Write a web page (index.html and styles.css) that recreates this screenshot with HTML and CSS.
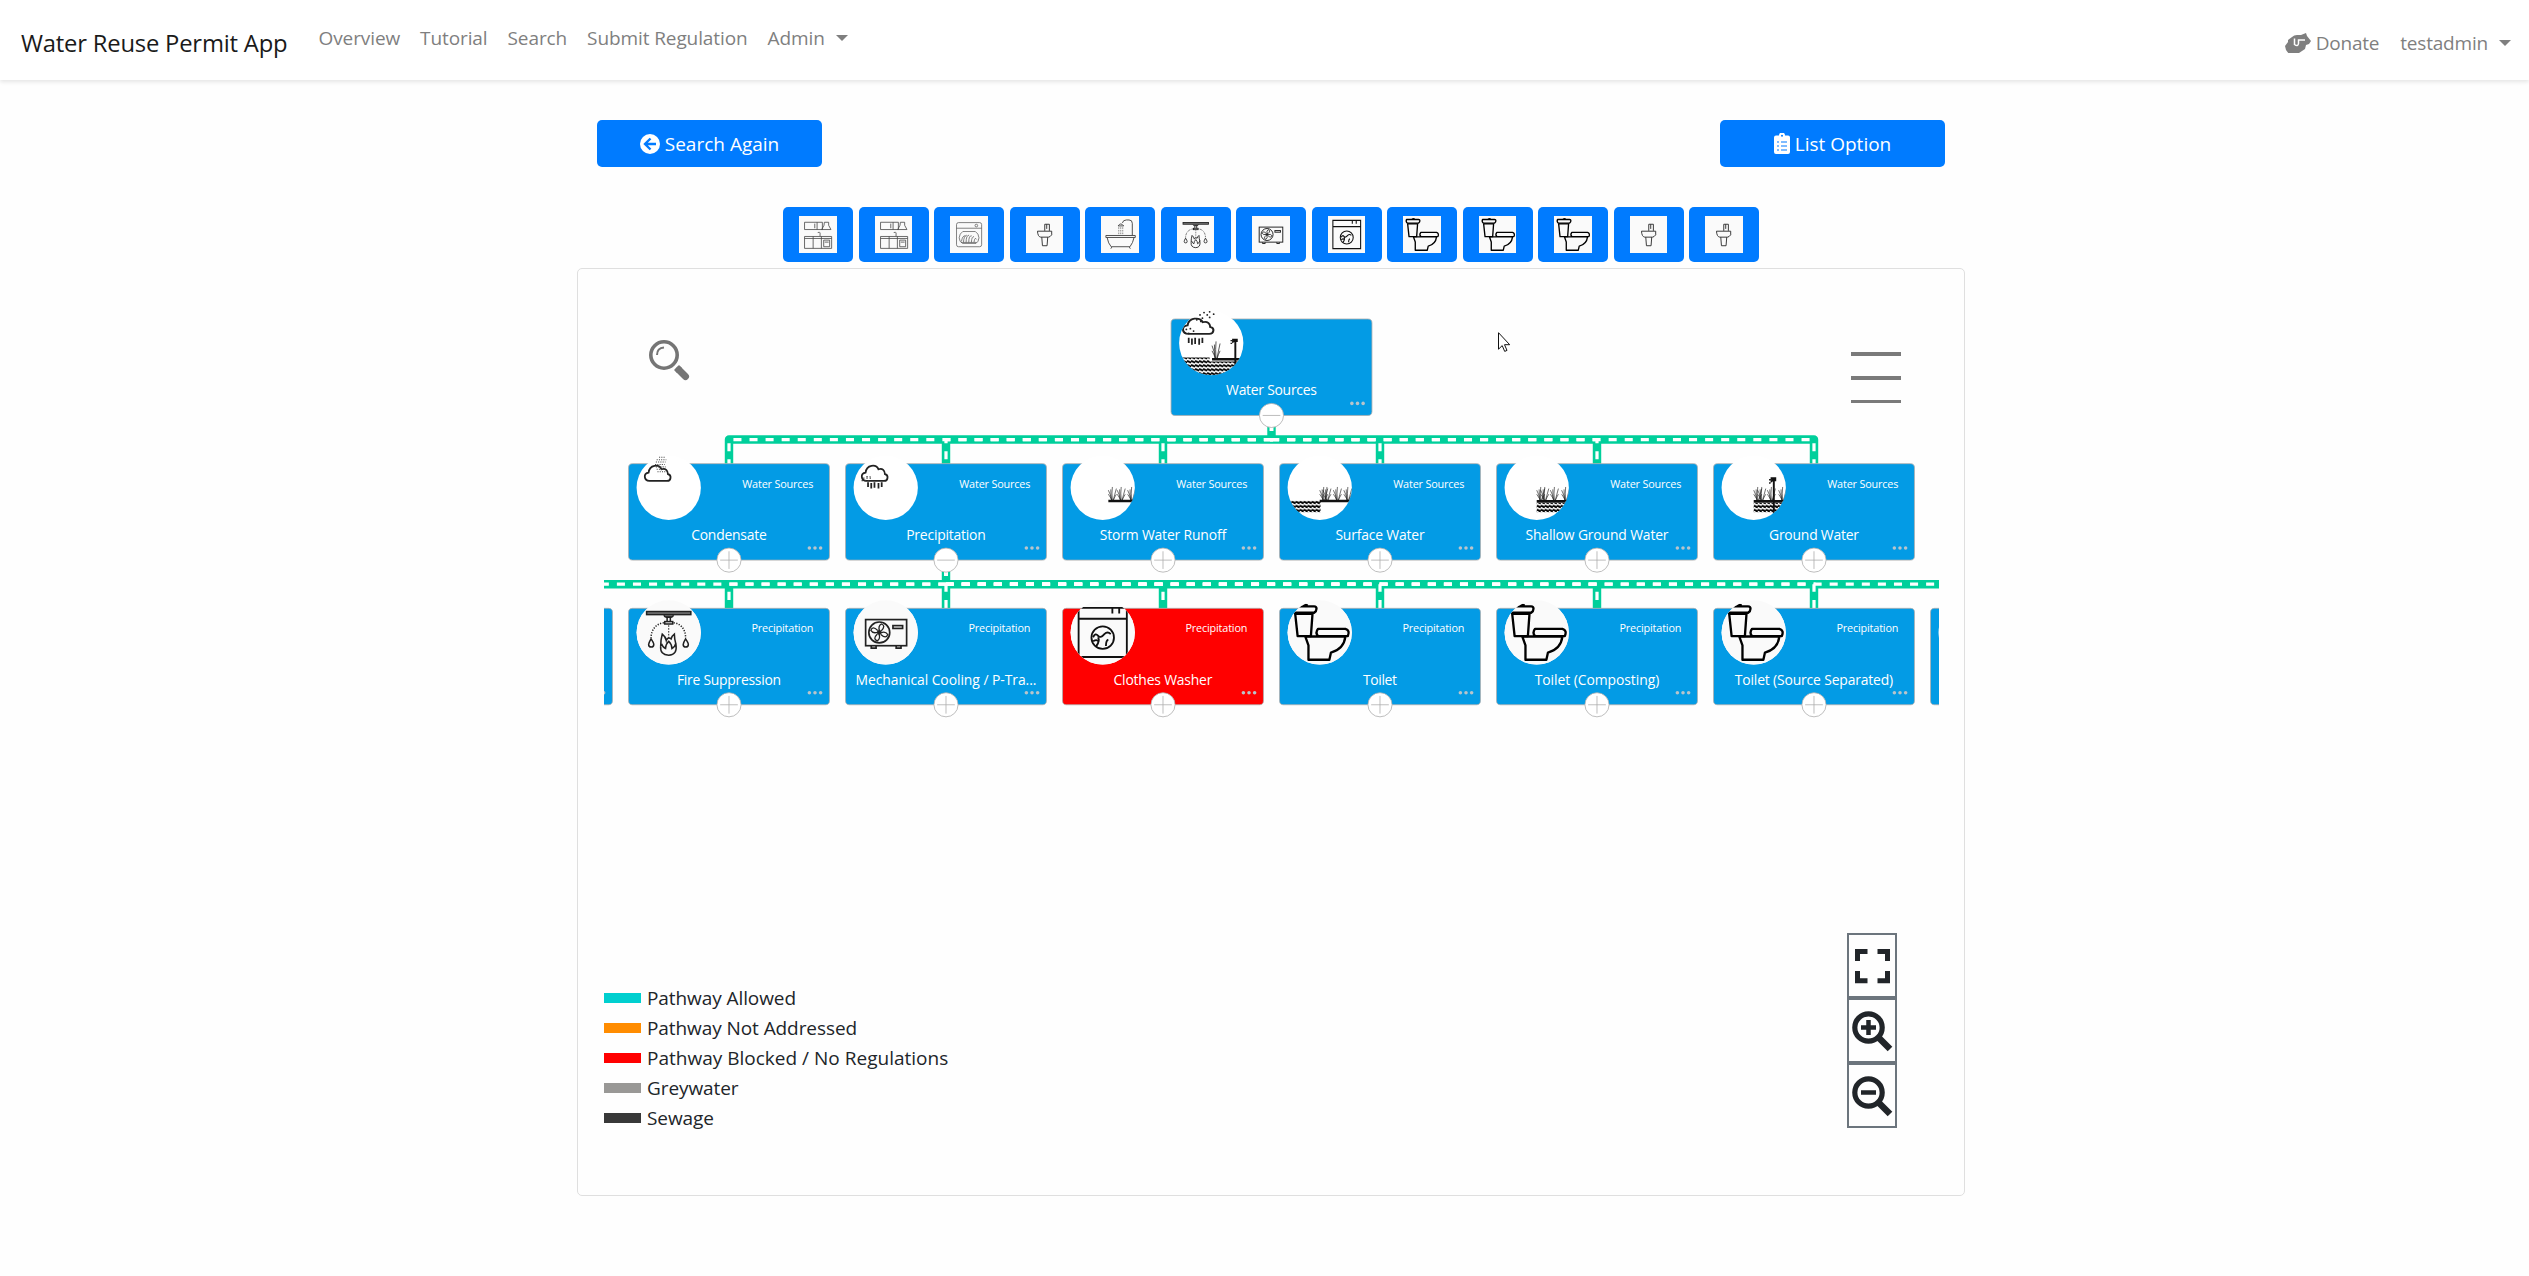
FILE: index.html
```html
<!DOCTYPE html>
<html lang="en">
<head>
<meta charset="utf-8">
<title>Water Reuse Permit App</title>
<link rel="stylesheet" href="styles.css">
</head>
<body>
<svg class="defs" width="0" height="0" aria-hidden="true">
  <defs>
    <clipPath id="round"><circle cx="50" cy="30" r="40"/></clipPath>
    <pattern id="waves" width="5" height="5" patternUnits="userSpaceOnUse" y="1">
      <path d="M-1 2.200Q.5.800 2.500 2.200T6 2.200" fill="none" stroke="#000" stroke-width="2.500"/>
    </pattern>
    <g id="card">
      <rect width="250" height="120" rx="5" stroke="#aeaeae"/>
      <g fill="#b9c4cb"><circle cx="225" cy="105" r="2.2"/><circle cx="232" cy="105" r="2.2"/><circle cx="239" cy="105" r="2.2"/></g>
      <circle cx="50" cy="30" r="40" fill="#fff"/>
    </g>
    <g id="minus"><circle cx="125" cy="120" r="15" fill="#fff" stroke="#aeaeae"/><path d="M114 120h22" stroke="#aeaeae"/></g>
    <g id="plus"><use href="#minus"/><path d="M125 109v22" stroke="#aeaeae"/></g>
    <g id="tuft" fill="none" stroke="#222" stroke-width=".8">
      <path d="M0 0Q-1-8-4-13M1 0Q0-10 1-17M2 0Q4-8 6-15M1 0Q-2-5-4-8M2 0Q4-5 6-8M0 0Q-1-9-1-14"/>
    </g>
    <g id="cloud" fill="none" stroke="#222" stroke-width="2.200">
      <path d="M26 21.500C19 21 18 12 25 11C26 1 38 0 41 7C46 5 49 9 49 13C54 14 53 21.500 48 21.500Z"/>
    </g>
    <g id="rain" stroke="#222" stroke-width="2.200"><path d="M28 23v6M32 24v7M36 23v7M41 24v7M45 23v6"/></g>
    <g id="pump"><path d="M72 17h7v5h-4l-3 2z" fill="#111"/><path d="M76 20v42" stroke="#111" stroke-width="2.400"/><path d="M70 20h4M70 24h2" stroke="#222" stroke-width="2"/></g>

    <g id="fire" fill="none" stroke="#222" stroke-width="1.900">
      <rect x="22.500" y="4" width="55" height="3.800" fill="#777"/>
      <path d="M44 8.500q1 2.500 3 2.500h6q2 0 3-2.500" fill="#444"/><path d="M48 11v6M52 11v6"/><rect x="45" y="16.500" width="10" height="3"/>
      <path d="M44 18C34 19 28 27 28 37M56 18C66 19 71 27 71 37" stroke-dasharray="1.500 1.800"/>
      <path d="M50 21v17" stroke-dasharray="2 1.600" stroke-width="1.200"/>
      <path d="M28 38q-3 5-3 7a3.200 3.200 0 006.400 0q0-2-3.400-7zM71 38q-3 5-3 7a3.200 3.200 0 006.400 0q0-2-3.400-7z"/>
      <path d="M40 47Q40 39 42 32Q46 35 47 40Q49 35 53 38Q54 34 57 32Q57 38 59 45Q61 58 50 58.500Q39 58 40 47M41 44Q43 49 46 50Q46 45 50 41Q54 45 54 50Q58 48 59 43"/>
    </g>
    <g id="cooling" fill="none" stroke="#222" stroke-width="2.100">
      <rect x="25" y="14" width="51" height="32.500"/><circle cx="42" cy="30" r="13"/><circle cx="42" cy="30" r="2" fill="#222"/>
      <g stroke-width="1.600" transform="rotate(-20 42 30)"><path id="blade" d="M43 28Q43 22 48 21Q53 25 45 29"/><use href="#blade" transform="rotate(90 42 30)"/><use href="#blade" transform="rotate(180 42 30)"/><use href="#blade" transform="rotate(270 42 30)"/></g>
      <rect x="59" y="21.500" width="12" height="3.500"/><path d="M32 47v2.500h6V47M63 47v2.500h6V47"/>
    </g>
    <g id="washer" fill="none" stroke="#111" stroke-width="2.300">
      <path d="M20 -.500h60v61H20zM20 13h60M62 .500v6M70.500 .500v6"/><circle cx="50" cy="36.500" r="14"/>
      <path d="M38 36q3-6 6-2t8-2q4-4 8 0M42 47q5-7 2-11M54 47q0-7 3-8M38 41q5-3 6 0"/>
    </g>
    <g id="toilet" fill="none" stroke="#000" stroke-width="2.900" stroke-linejoin="round">
      <path d="M29-3.500q3-1.500 6 0M17-2.500h26q3 0 3 3t-3 5H19q-4-3-2-8z"/><path d="M19.500 7L22.500 34.500H39L41 7z"/>
      <path d="M48 34.500q-4-4 0-9h34q6 2 3 9zM32 35l4 11v18h26l2-9Q80 51 82 35z"/>
    </g>
    <g id="kitchen" fill="none" stroke="#444" stroke-width="2.400">
      <path d="M16 19h54v22H16zM54 19v22M47 23v14M76 19h13v9l7 13H68l7-13zM16 62h82v36H16zM42 62v36M67 62v36M16 68h82M63 61V51q0-3-7-1M74 73h18v20H74zM77 79h12"/>
    </g>
    <g id="dishwasher" fill="none" stroke="#555" stroke-width="2.200">
      <rect x="19" y="20" width="76" height="73" rx="6"/><path d="M19 37h76"/><circle cx="79" cy="29" r="4"/>
      <path d="M38 47h38q10 6 11 19-1 12-9 17H37q-9-4-10-17 1-13 11-19z"/><path d="M34 77q3-19 12-17M40 80q1-20 10-22M48 80q0-22 9-22M56 80q0-22 9-20M64 80q1-20 8-17M72 79q2-17 8-8M33 80h47"/>
    </g>
    <g id="sink" fill="none" stroke="#333" stroke-width="2.900">
      <path d="M56 45V25h14v20M62 25v14M34 46h43v11q-5 7-10 7H44q-9-1-10-18zM47 64l2 26h14l2-26"/>
    </g>
    <g id="bath" fill="none" stroke="#444" stroke-width="2.800">
      <path d="M14 59h89v6H14zM18 66q3 17 12 27h57q9-12 12-27M32 94l-3 5M85 94l3 5M94 58V22q0-10-10-10h-8q-10 0-12 9"/><path d="M51 30q8-12 17 0z"/><path d="M53 34v23M59 34v23M65 34v23" stroke-dasharray="5 3" stroke-width="1.800"/>
    </g>
  </defs>
</svg>

<header class="navbar">
  <a class="brand">Water Reuse Permit App</a>
  <nav class="links">
    <a>Overview</a><a>Tutorial</a><a>Search</a><a>Submit Regulation</a><a class="caret">Admin</a>
  </nav>
  <nav class="links account">
    <a class="donate"><svg width="26" height="20" viewBox="0 0 26 20"><path d="M0 13l3-4V7l4-3q2-2 5-2h4l5-2 1 3 4 5-2 3-3 1-1 4-3 2-3 2H8l-4 1-3-4z" fill="#7f7f7f"/><path d="M9.500 5.500v6q3.500 2.500 4-1V7H20" fill="none" stroke="#fff" stroke-width="1.500"/></svg>Donate</a><a class="caret">testadmin</a>
  </nav>
</header>

<main>
  <div class="actions">
    <button class="btn"><svg width="20" height="20" viewBox="0 0 20 20"><circle cx="10" cy="10" r="10" fill="#fff"/><path d="M10.500 4.500L5 10l5.500 5.500M5.500 10H16" fill="none" stroke="#007bff" stroke-width="2.400"/></svg><span>Search Again</span></button>
    <button class="btn"><svg width="16" height="21" viewBox="0 0 16 21"><path d="M2 2.500h3a3 3 0 016 0h3a2 2 0 012 2V19a2 2 0 01-2 2H2a2 2 0 01-2-2V4.500a2 2 0 012-2z" fill="#fff"/><circle cx="8" cy="2.800" r="1" fill="#007bff"/><path d="M3 9h2M7 9h6M3 13h2M7 13h6M3 17h2M7 17h6" stroke="#007bff" stroke-width="1.200"/></svg><span>List Option</span></button>
  </div>

  <div class="fixtures">
    <button class="tile"><svg viewBox="0 0 112 112"><use href="#kitchen"/></svg></button>
    <button class="tile"><svg viewBox="0 0 112 112"><use href="#kitchen"/></svg></button>
    <button class="tile"><svg viewBox="0 0 112 112"><use href="#dishwasher"/></svg></button>
    <button class="tile"><svg viewBox="0 0 112 112"><use href="#sink"/></svg></button>
    <button class="tile"><svg viewBox="0 0 112 112"><use href="#bath"/></svg></button>
    <button class="tile"><svg viewBox="10 -10 80 80"><use href="#fire"/></svg></button>
    <button class="tile"><svg viewBox="10 -10 80 80"><use href="#cooling"/></svg></button>
    <button class="tile"><svg viewBox="10 -10 80 80"><use href="#washer"/></svg></button>
    <button class="tile"><svg viewBox="10 -10 80 80"><use href="#toilet"/></svg></button>
    <button class="tile"><svg viewBox="10 -10 80 80"><use href="#toilet"/></svg></button>
    <button class="tile"><svg viewBox="10 -10 80 80"><use href="#toilet"/></svg></button>
    <button class="tile"><svg viewBox="0 0 112 112"><use href="#sink"/></svg></button>
    <button class="tile"><svg viewBox="0 0 112 112"><use href="#sink"/></svg></button>
  </div>

  <section class="panel">
    <svg class="chart" width="1335" height="664">
      <g transform="translate(667.500 50) scale(.8037)">
        <g class="pipe">
          <path d="M0 120V150H-675V180M0 150H675V180M-405 150V180M-135 150V180M135 150V180M405 150V180"/>
          <path d="M-405 300V330M-900 330H900M-675 330V360M-405 330V360M-135 330V360M135 330V360M405 330V360M675 330V360"/>
        </g>
        <g class="flow">
          <path d="M0 120V150H-675V180"/><path d="M0 120V150H675V180"/><path d="M0 120V150H-405V180"/><path d="M0 120V150H405V180"/><path d="M0 120V150H-135V180"/><path d="M0 120V150H135V180"/>
          <path d="M-405 300V330H-900"/><path d="M-405 300V330H900"/><path d="M-405 300V360"/><path d="M-405 300V330H-675V360"/><path d="M-405 300V330H-135V360"/><path d="M-405 300V330H135V360"/><path d="M-405 300V330H405V360"/><path d="M-405 300V330H675V360"/>
        </g>

        <g transform="translate(-125 0)">
          <use href="#card" class="blue"/>
          <g clip-path="url(#round)">
            <use href="#cloud" transform="translate(-9 -3) scale(1.180 1)"/><use href="#rain" transform="translate(-6 -2) scale(1 1.100)"/>
            <use href="#tuft" transform="translate(55 50) scale(1 1.300)"/>
            <path d="M51 50h40" stroke="#111" stroke-width="3"/><path d="M8 48h40v5H8zM8 53h84v20H8z" fill="url(#waves)"/>
            <use href="#pump" transform="translate(4 11) scale(1 .8)"/>
          </g>
          <path d="M36-5h.1M41-8h.1M48-9h.1M53-6h.1M45-5h.1M39-1h.1M48-2h.1M32 1h.1M37 3h.1M19 13h.1M24 12h.1M28 15h.1M22 18h.1M17 17h.1" stroke="#222" stroke-width="2.200" stroke-linecap="round"/>
          <text class="name" x="125" y="95" textLength="113">Water Sources</text><use href="#minus"/>
        </g>

        <g transform="translate(-800 180)">
          <use href="#card" class="blue"/><use href="#cloud"/>
          <path d="M38-8h8M35-5h12M34-2h12M33 1h12M34 4h12M35 7h11M36 10h10" stroke="#444" stroke-width="1.300" stroke-dasharray="1.300 1.500"/>
          <text class="name" x="125" y="95" textLength="94">Condensate</text><text class="from" x="230" y="30" textLength="88.500">Water Sources</text><use href="#plus"/>
        </g>
        <g transform="translate(-530 180)">
          <use href="#card" class="blue"/><use href="#cloud"/><use href="#rain"/>
          <path d="M20 21h12M22 18h12M26 16h5" stroke="#333" stroke-width="1.500" stroke-dasharray="1.500 2.500"/>
          <text class="name" x="125" y="95" textLength="99">Precipitation</text><text class="from" x="230" y="30" textLength="88.500">Water Sources</text><use href="#minus"/>
        </g>
        <g transform="translate(-260 180)">
          <use href="#card" class="blue"/>
          <g clip-path="url(#round)"><use href="#tuft" x="61" y="46"/><use href="#tuft" x="72" y="46"/><use href="#tuft" x="85" y="46"/><path d="M57 46.500h33" stroke="#111" stroke-width="3"/></g>
          <text class="name" x="125" y="95" textLength="157.500">Storm Water Runoff</text><text class="from" x="230" y="30" textLength="88.500">Water Sources</text><use href="#plus"/>
        </g>
        <g transform="translate(10 180)">
          <use href="#card" class="blue"/>
          <g clip-path="url(#round)"><use href="#tuft" x="54" y="46"/><use href="#tuft" x="58" y="46"/><use href="#tuft" x="71" y="46"/><use href="#tuft" x="84" y="46"/><path d="M50 46.500h40" stroke="#111" stroke-width="3"/><path d="M8 46h43v15H8z" fill="url(#waves)"/></g>
          <text class="name" x="125" y="95" textLength="111">Surface Water</text><text class="from" x="230" y="30" textLength="88.500">Water Sources</text><use href="#plus"/>
        </g>
        <g transform="translate(280 180)">
          <use href="#card" class="blue"/>
          <g clip-path="url(#round)"><use href="#tuft" x="54" y="46"/><use href="#tuft" x="59" y="46"/><use href="#tuft" x="71" y="46"/><use href="#tuft" x="85" y="46"/><path d="M50 46.500h40" stroke="#111" stroke-width="2.500"/><path d="M50 48h40v13H50z" fill="url(#waves)"/></g>
          <text class="name" x="125" y="95" textLength="178">Shallow Ground Water</text><text class="from" x="230" y="30" textLength="88.500">Water Sources</text><use href="#plus"/>
        </g>
        <g transform="translate(550 180)">
          <use href="#card" class="blue"/>
          <g clip-path="url(#round)"><use href="#tuft" x="54" y="46"/><use href="#tuft" x="59" y="46"/><use href="#tuft" x="71" y="46"/><use href="#tuft" x="85" y="46"/><path d="M50 46.500h40" stroke="#111" stroke-width="2.500"/><path d="M50 48h40v13H50z" fill="url(#waves)"/><use href="#pump" x="-1"/></g>
          <text class="name" x="125" y="95" textLength="112">Ground Water</text><text class="from" x="230" y="30" textLength="88.500">Water Sources</text><use href="#plus"/>
        </g>

        <g transform="translate(-1070 360)"><use href="#card" class="blue"/></g>
        <g transform="translate(-800 360)">
          <use href="#card" class="blue"/><circle class="photo" cx="50" cy="30" r="40"/><use href="#fire"/>
          <text class="name" x="125" y="95" textLength="129.500">Fire Suppression</text><text class="from" x="230" y="30" textLength="77">Precipitation</text><use href="#plus"/>
        </g>
        <g transform="translate(-530 360)">
          <use href="#card" class="blue"/><circle class="photo" cx="50" cy="30" r="40"/><use href="#cooling"/>
          <text class="name" x="125" y="95" textLength="225">Mechanical Cooling / P-Tra...</text><text class="from" x="230" y="30" textLength="77">Precipitation</text><use href="#plus"/>
        </g>
        <g transform="translate(-260 360)">
          <use href="#card" class="red"/><circle class="photo" cx="50" cy="30" r="40"/><g clip-path="url(#round)"><use href="#washer"/></g>
          <text class="name" x="125" y="95" textLength="123">Clothes Washer</text><text class="from" x="230" y="30" textLength="77">Precipitation</text><use href="#plus"/>
        </g>
        <g transform="translate(10 360)">
          <use href="#card" class="blue"/><circle class="photo" cx="50" cy="30" r="40"/><g clip-path="url(#round)"><use href="#toilet"/></g>
          <text class="name" x="125" y="95" textLength="42">Toilet</text><text class="from" x="230" y="30" textLength="77">Precipitation</text><use href="#plus"/>
        </g>
        <g transform="translate(280 360)">
          <use href="#card" class="blue"/><circle class="photo" cx="50" cy="30" r="40"/><g clip-path="url(#round)"><use href="#toilet"/></g>
          <text class="name" x="125" y="95" textLength="155">Toilet (Composting)</text><text class="from" x="230" y="30" textLength="77">Precipitation</text><use href="#plus"/>
        </g>
        <g transform="translate(550 360)">
          <use href="#card" class="blue"/><circle class="photo" cx="50" cy="30" r="40"/><g clip-path="url(#round)"><use href="#toilet"/></g>
          <text class="name" x="125" y="95" textLength="197">Toilet (Source Separated)</text><text class="from" x="230" y="30" textLength="77">Precipitation</text><use href="#plus"/>
        </g>
        <g transform="translate(820 360)"><use href="#card" class="blue"/></g>
      </g>
    </svg>

    <svg class="find" width="42" height="42" viewBox="0 0 42 42"><circle cx="16" cy="16" r="13.200" fill="none" stroke="#757575" stroke-width="3.600"/><path d="M9 16q0-7 7-7.500" fill="none" stroke="#757575" stroke-width="2"/><path d="M28.500 28.500l3 3" stroke="#757575" stroke-width="7"/><path d="M31 31l6.500 6.500" stroke="#757575" stroke-width="7" stroke-linecap="round"/></svg>
    <div class="menu"><i></i><i></i><i></i></div>
    <svg class="pointer" width="14" height="21" viewBox="0 0 14 21"><path d="M.5.7v16.500l3.700-3.600 2.500 5.800 2.300-1-2.500-5.700h5.200z" fill="#fff" stroke="#111"/></svg>

    <div class="footer">
      <ul class="legend">
        <li><i class="allowed"></i><span>Pathway Allowed</span></li>
        <li><i class="open"></i><span>Pathway Not Addressed</span></li>
        <li><i class="blocked"></i><span class="wide">Pathway Blocked / No Regulations</span></li>
        <li><i class="grey"></i><span>Greywater</span></li>
        <li><i class="sewage"></i><span>Sewage</span></li>
      </ul>
      <div class="zoom">
        <button><svg width="46" height="61" viewBox="0 0 46 61"><path d="M8.500 26V16.500H18.500M28.500 16.500H38.500V26M8.500 36V45.700H18.500M28.500 45.700H38.500V36" fill="none" stroke="#212529" stroke-width="5"/></svg></button>
        <button><svg width="46" height="61" viewBox="0 0 46 61"><circle cx="19.500" cy="27.500" r="13.700" fill="none" stroke="#212529" stroke-width="5.200"/><path d="M12 27.500h15M19.500 20v15" stroke="#212529" stroke-width="4.500"/><path d="M30 38l11 11" stroke="#212529" stroke-width="6.500"/></svg></button>
        <button><svg width="46" height="61" viewBox="0 0 46 61"><circle cx="19.500" cy="27.500" r="13.700" fill="none" stroke="#212529" stroke-width="5.200"/><path d="M12 27.500h15" stroke="#212529" stroke-width="4.500"/><path d="M30 38l11 11" stroke="#212529" stroke-width="6.500"/></svg></button>
      </div>
    </div>
  </section>
</main>
</body>
</html>
```
FILE: styles.css
```css
* { box-sizing: border-box; }
body {
  margin: 0;
  background: #fefefe;
  color: #212529;
  font: 19px/30px "Open Sans", "Noto Sans", sans-serif;
}
button { font: inherit; margin: 0; padding: 0; border: 0; }
.defs { display: block; }

.navbar {
  display: flex;
  align-items: flex-start;
  height: 80px;
  padding: 0 18px 0 21px;
  background: #fff;
  box-shadow: 0 2px 4px rgba(0, 0, 0, .1);
}
.brand {
  width: 297.5px;
  padding-top: 28px;
  font-size: 23.8px;
  letter-spacing: -.2px;
  color: #1a1a1a;
  white-space: nowrap;
}
.links {
  display: flex;
  gap: 20px;
  padding-top: 23px;
  color: #7f7f7f;
  letter-spacing: -.1px;
  white-space: nowrap;
}
.account { gap: 21px; margin-left: auto; padding-top: 28px; letter-spacing: -.2px; }
.donate { display: flex; align-items: center; gap: 5px; }
.caret { display: flex; align-items: center; gap: 11px; }
.caret::after {
  content: "";
  border: 6px solid transparent;
  border-top-color: #7f7f7f;
  border-bottom: 0;
}

main { width: 1388px; margin: 40px 0 0 577px; }
.actions { display: flex; justify-content: space-between; padding: 0 20px; }
.btn {
  display: flex;
  align-items: center;
  justify-content: center;
  gap: 5px;
  width: 225px;
  height: 47px;
  border-radius: 5px;
  background: #007bff;
  color: #fff;
}
.fixtures {
  display: flex;
  justify-content: center;
  gap: 5.5px;
  margin: 40px 0 6px;
}
.tile {
  display: flex;
  align-items: center;
  justify-content: center;
  width: 70px;
  height: 55px;
  border-radius: 5px;
  background: #007bff;
}
.tile svg { width: 37.5px; height: 37px; background: #fafafa; }

.panel {
  position: relative;
  height: 928px;
  padding: 0 26px;
  border: 1px solid #dfdfdf;
  border-radius: 5px;
}
.chart { display: block; }
.pipe { fill: none; stroke: #00cf9b; stroke-width: 10.5; stroke-linejoin: round; }
.flow { fill: none; stroke: #fff; stroke-width: 4; stroke-dasharray: 10; stroke-dashoffset: -9.5; }
.blue { fill: #039be5; }
.red { fill: #f00; }
.photo { fill: #fafafa; }
.name { font-size: 17.3px; fill: #fff; text-anchor: middle; }
.from { font-size: 13.5px; fill: #fff; text-anchor: end; }

.find { position: absolute; left: 70px; top: 70px; }
.menu {
  position: absolute;
  left: 1273px;
  top: 83px;
  display: flex;
  flex-direction: column;
  gap: 20px;
  width: 50px;
}
.menu i { height: 4px; background: #7a7a7a; }
.menu i:last-child { height: 3px; }
.pointer { position: absolute; left: 920px; top: 63px; }

.footer { display: flex; justify-content: space-between; align-items: flex-start; }
.legend { margin: 50px 0 0; padding: 0; list-style: none; letter-spacing: -.08px; }
.legend li { display: flex; align-items: center; gap: 6px; height: 30px; }
.legend i { width: 37px; height: 10px; }
.legend .wide { letter-spacing: .01px; }
.allowed { background: #00cfcf; }
.open { background: #ff8c00; }
.blocked { background: #f00; }
.grey { background: #999896; }
.sewage { background: #383838; }
.zoom { display: flex; flex-direction: column; margin-right: 41px; }
.zoom button { width: 50px; height: 65px; border: 2px solid #6c757d; background: none; }
.zoom svg { display: block; }
```
